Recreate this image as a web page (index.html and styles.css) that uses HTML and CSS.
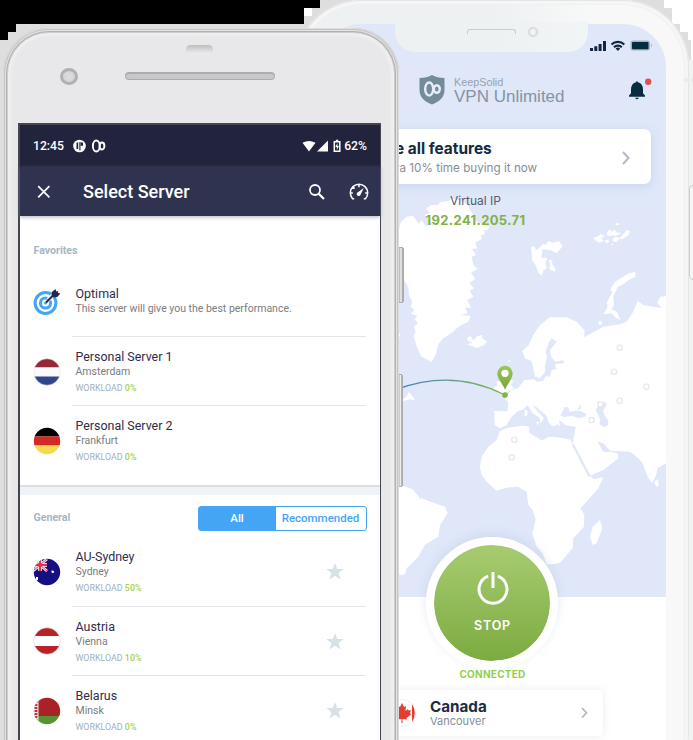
FILE: index.html
```html
<!DOCTYPE html>
<html lang="en">
<head>
<meta charset="utf-8">
<title>VPN Unlimited</title>
<link rel="stylesheet" href="styles.css">
</head>
<body>
<main class="stage">
  <svg class="backdrop" width="693" height="740" viewBox="0 0 693 740" shape-rendering="crispEdges">
    <path fill="#dededf" d="M0 0h693v740H0z"/>
    <path fill="#000" d="M0 0h320v8h-16v16H16v8H8v8H0z"/>
    <path fill="#fff" d="M304 8h8v8h-8zM664 0h29v740h-2V40h-3v-8h-8v-8h-8V8h-8z"/>
    <path fill="#f1f2f2" d="M684 60h9v680h-9z"/>
  </svg>

  <section class="phone-back">
    <div class="speaker-back"></div><div class="camera-back"></div>
    <div class="notch"></div>
    <div class="vpn">
      <svg class="map" width="348" height="573" viewBox="318 24 348 573">
        <defs>
          <linearGradient id="arc" x1="27" x2="345" y1="0" y2="0" gradientUnits="userSpaceOnUse"><stop stop-color="#4779ac"/><stop offset=".35" stop-color="#5d93a0"/><stop offset="1" stop-color="#86b64b"/></linearGradient>
          <linearGradient id="pin" x2="0" y2="1"><stop stop-color="#9cc862"/><stop offset="1" stop-color="#74a634"/></linearGradient>
        </defs>
        <g transform="translate(390 180) scale(.33333)">
          <g fill="#fff">
            <path d="M0 150L27 148 32 126 50 110 68 107 77 118 87 132 95 120 106 137 130 134 103 105 120 99 107 86 125 75 145 74 150 66 175 63 185 55 215 62 235 77 240 90 250 105 248 118 275 130 298 140 291 152 283 148 284 163 272 166 276 176 255 188 262 205 246 207 258 225 245 230 250 255 262 267 243 278 256 296 238 310 252 325 239 332 250 350 232 360 243 385 226 382 233 400 212 405 242 407 235 425 205 440 190 455 160 475 145 492 138 522 125 546 95 530 82 505 70 467 76 455 72 440 84 430 74 418 82 408 63 401 74 390 62 380 67 365 57 345 55 320 42 300 0 260z"/>
            <path d="M231 475l10-8 10 14 10-12 15-4 2 10 13 10-10 11-22 8-15-7-12-3 15-7-13-3z"/>
            <path d="M423 202l9-4 7 13 13-12 6 10-4 24 19 1-7 16 5 13-11 9-6 15-9-9-8-22-10-14zM448 203l12-11 7 3 8-12 12 5 20-4 11 15-18 20-20-9-20-2zM477 239l11 3-2 10 11 14-3 9-16-7 2-12z"/>
            <path d="M610 175l15-7 7-6 11 6-10 8 9 6-14 6-10-6zM650 158l9-10 7 8 8-8 4 9 16 3-16 8-9-2-16 2zM668 176l9-6 12 4 22-24 8 2-2 12-18 13-9-1-12 10-10-3zM678 130h9v5h-9zM645 182l10-4 2 8-8 3zM662 191l10 1-6 4z"/>
            <path d="M735 276l2 14-21 10-20 15-12 5-14 29 2 26-8 13 17 7 10 25-12-6-15-14-23 3 12-24-3-11 7-13 10-20-7-5 15-25 20-12 18-12z"/><circle cx="631" cy="429" r="6"/>
            <path d="M840 348L810 350 802 368 815 385 790 380 760 375 743 362 730 395 710 425 690 433 640 440 583 472 583 450 560 425 530 412 480 412 450 435 430 465 415 497 397 512 405 535 425 543 435 590 450 595 465 575 465 555 471 530 467 517 475 490 485 475 500 485 480 510 484 531 496 545 520 541 522 549 495 553 500 567 485 570 480 590 467 588 460 602 440 605 433 598 403 600 385 623 365 630 345 655 355 668 352 694 312 693 314 735 330 745 350 735 365 710 385 692 398 690 413 675 428 700 449 713 451 731 462 714 444 696 428 675 440 682 470 708 475 726 491 745 502 732 511 740 507 719 526 735 557 741 547 795 568 830 600 887 640 870 685 835 682 820 663 816 640 815 623 785 640 790 660 812 720 815 745 835 758 850 775 895 787 909 798 886 803 865 840 843z"/>
            <path d="M330 753L350 744 400 737 417 740 419 760 460 780 472 772 490 770 542 778 547 795 575 845 600 888 612 897 640 892 625 925 572 985 583 1005 582 1040 550 1075 548 1105 510 1148 490 1152 470 1153 458 1120 440 1100 427 1060 437 1020 428 990 415 975 410 935 391 925 385 920 350 923 320 932 290 905 275 885 270 860 275 830 295 800 320 780z"/>
            <path d="M630 1020l7 25-17 45-12 5-8-25 8-30zM795 903l8-5 4 17-6 7-7-10z"/>
            <path d="M0 913L50 920 70 930 90 955 75 962 95 955 130 968 165 980 173 1000 150 1035 145 1070 105 1094 85 1130 50 1165 46 1182 35 1186 20 1180z"/>
            <path d="M310 625l12-10-4-12 10 2 7-15 22 5 12 8-5 13 7 9-18 10-22 6zM405 690l8 2-2 15-8 1zM436 724l12 3-4 9zM355 540l8 2-6 5zM20 670l30-20 7-15 10 14 9 12-16-3-17 4zM27 460l5 3-5 10z"/>
          </g>
          <g fill="#dfe7f9">
            <path d="M511 707l14-27 9 2 5 14 14-4 20 1 16 10-4 7-18 4-22-6-22 3z"/>
            <path d="M567 681l8-9-4 16-9 3zM617 690l12-19 18-5 3 8-11 18 5 15 12 15-4 16-12 3-12-10 3-12z"/>
            <path d="M505 740l50 0-7 33-8 6-35-10-32 2-20 10-22-15-16-10 18-13 40 10 3-17z"/>
          </g>
          <path fill="none" stroke="#dfe7f9" stroke-width="7" d="M549 794l50 96"/>
          <g fill="#fff" stroke="#e5e6e8" stroke-width="3.5"><circle cx="689" cy="503" r="8"/><circle cx="672" cy="575" r="8"/><circle cx="769" cy="620" r="8"/><circle cx="689" cy="662" r="8"/><circle cx="631" cy="673" r="8"/><circle cx="605" cy="720" r="8"/><circle cx="373" cy="779" r="8"/><circle cx="365" cy="832" r="8"/></g>
          <path fill="none" stroke="url(#arc)" stroke-width="4" d="M20 628Q190 565 345 645"/>
          <circle cx="345" cy="645" r="8.5" fill="#83b444"/>
          <path fill="url(#pin)" d="M345 629C339 612 322 598 322 580a23 23 0 0 1 46 0C368 598 351 612 345 629z"/>
          <circle cx="345" cy="580" r="11" fill="#fff"/>
        </g>
      </svg>

      <div class="ios-status">
        <svg width="64" height="14" viewBox="590 39 64 14">
          <path fill="#13263f" d="M590 48h3v3h-3zM594.300 46.300h3v4.700h-3zM598.600 44h3v7h-3zM603 41h3v10h-3z"/>
          <path fill="none" stroke="#13263f" stroke-width="2.100" d="M611.500 44.500a9 9 0 0 1 12.800 0M614 47.200a5.500 5.500 0 0 1 7.800 0"/><path fill="#13263f" d="M615.600 48.600a3.400 3.400 0 0 1 4.600 0l-2.300 2.500z"/>
          <rect x="630.500" y="40.600" width="19.500" height="10" rx="2.500" fill="#a4b2c5"/><rect x="632" y="42" width="16.500" height="7.300" rx="1" fill="#052b40"/><path fill="#a4b2c5" d="M651 43.500q2 2 0 4z"/>
        </svg>
      </div>
      <header class="brand">
        <svg width="26" height="31" viewBox="0 0 26 31"><path fill="#748b9b" d="M13 0q5 3 12.500 3v12c0 8-6 12-12.500 14.500C6.500 27 .5 23 .5 15V3Q8 3 13 0z"/><g fill="none" stroke="#e5edf9" stroke-width="2.400"><ellipse cx="10.200" cy="14" rx="4" ry="6.500"/><ellipse cx="17.800" cy="14" rx="3" ry="3.800"/></g></svg>
        <div class="brand-name"><span>KeepSolid</span><b>VPN Unlimited</b></div>
        <svg class="bell" width="24" height="24" viewBox="0 0 24 24"><path fill="#082d40" d="M7.500 3.200q1-.2 1.100 1.100 4.800 1 5.100 7v4l2 2.200v1.200H-.3v-1.200l2-2.200v-4q.3-6 5.100-7 0-1 .7-1.100zM5.700 19.700h4q-2 3-4 0z" transform="translate(.3)"/><circle cx="19.200" cy="3.700" r="3.200" fill="#e5504b"/></svg>
      </header>
      <article class="promo">
        <div><h2>e all features</h2><p>ra 10% time buying it now</p></div>
        <svg width="8" height="14" viewBox="0 0 8 14"><path fill="none" stroke="#b3bac4" stroke-width="2" d="M1 1l5.500 6L1 13"/></svg>
      </article>
      <div class="ip"><span>Virtual IP</span><b>192.241.205.71</b></div>
      <div class="panel">
        <button class="stop">
          <svg width="32" height="36" viewBox="0 0 32 36"><path fill="none" stroke="#fff" stroke-width="3" d="M16 1v16M20.900 5.200a14 14 0 1 1-9.800 0"/></svg>
          STOP
        </button>
        <p class="connected">CONNECTED</p>
        <article class="country">
          <svg width="28" height="28" viewBox="0 0 28 28"><circle cx="14" cy="14" r="13.500" fill="#fff" stroke="#eee"/><path fill="#e43c30" d="M24 5q5.500 9 0 18zM4 5q-5.500 9 0 18zM14 4l2 4 2-1-.5 5 2.500-2 .6 1.500 2.400-.2-1 3 1.300 1-4.800 3.700.5 1.500-4.500-.4V24h-1v-3.900l-4.500.4.500-1.500-4.800-3.700 1.300-1-1-3 2.400.2.600-1.500 2.500 2L10 7l2 1z"/></svg>
          <div class="place"><h2>Canada</h2><p>Vancouver</p></div>
          <svg width="7" height="12" viewBox="0 0 7 12"><path fill="none" stroke="#bbb" stroke-width="1.700" d="M1 1l4.500 4.800L1 10.600"/></svg>
        </article>
      </div>
    </div>
  </section>
  <i class="side-button back-key"></i>
  <i class="antenna"></i>
  <i class="side-button key-one"></i>
  <i class="side-button key-two"></i>

  <section class="phone-front">
    <div class="sensor"></div>
    <div class="hardware"><i class="lens"></i><i class="earpiece"></i></div>
    <div class="screen">
      <div class="status">
        <span>12:45</span>
        <svg width="33" height="14" viewBox="0 0 33 14"><circle cx="6.500" cy="7" r="6.300" fill="#fff"/><path fill="#22243d" d="M3.500 3.500h1.700v6.500H3.500zM7.500 3.500H10v3.300H7.500z"/><path fill="none" stroke="#22243d" stroke-width="1.100" d="M6.900 3v8.500"/><g fill="none" stroke="#fff" stroke-width="1.900"><ellipse cx="23.300" cy="7" rx="3.400" ry="5.500"/><ellipse cx="29" cy="7" rx="2.400" ry="3.500"/></g></svg>
        <svg class="signals" width="40" height="14" viewBox="0 0 40 14"><path fill="#fff" d="M.5 3.800Q7 0 13.500 3.800L7 12.500zM26 1.500v11H15z"/><path fill="none" stroke="#fff" stroke-width="1.500" d="M32.300 2.700h5.500v9.500h-5.500zM33.800 1.500h2.500"/><path fill="#fff" d="M35.500 4l-2.200 4h1.500v3l2.200-4h-1.500z"/></svg>
        <span class="charge">62%</span>
      </div>
      <div class="toolbar">
        <svg width="14" height="14" viewBox="0 0 14 14"><path stroke="#fff" stroke-width="1.700" d="M1.200 1.200l11.200 11.200M12.400 1.200L1.200 12.400"/></svg>
        <h1>Select Server</h1>
        <svg class="search" width="18" height="18" viewBox="0 0 18 18"><circle cx="7" cy="7" r="5" fill="none" stroke="#fff" stroke-width="1.800"/><path stroke="#fff" stroke-width="2.200" d="M10.700 10.700l5.300 5.300"/></svg>
        <svg width="20" height="18" viewBox="0 0 20 18"><path fill="none" stroke="#fff" stroke-width="1.500" d="M5.200 15.700H3.500a8.700 8.700 0 1 1 13 0h-1.700M10 1.500v2.800M4 4l1.600 1.600M1.500 10h2.300M18.500 10h-2.300"/><path fill="#fff" d="M14.800 5l-3.200 6.500a2 2 0 1 1-2.700-2.300z"/></svg>
      </div>

      <div class="favorites">
        <h3>Favorites</h3>
        <div class="row optimal">
          <svg class="flag" width="28" height="28" viewBox="0 0 28 28"><g fill="none" stroke="#45a5f5" stroke-width="3"><circle cx="12.500" cy="15" r="10.400"/><circle cx="12.500" cy="15" r="5.100"/></g><circle cx="12.500" cy="15" r="1.500" fill="#45a5f5"/><path stroke="#fff" stroke-width="4" d="M15 12l7-7"/><path stroke="#25264a" stroke-width="2" d="M13 14.500l9.500-9.500"/><path fill="#25264a" d="M18.500 7l.3-3 3.700-3 .7 2.500 2-.5-.3 1.800 2.500.8-3.200 3.500-3.700.4z"/></svg>
          <div class="info"><h4>Optimal</h4><p>This server will give you the best performance.</p></div>
        </div>
        <div class="row fav">
          <svg class="flag" width="28" height="28" viewBox="0 0 28 28"><clipPath id="disc"><circle cx="14" cy="14" r="13.200"/></clipPath><g clip-path="url(#disc)"><path fill="#fafafa" d="M0 0h28v28H0z"/><path fill="#952737" d="M0 0h28v9.200H0z"/><path fill="#30458a" d="M0 18.500h28V28H0z"/></g><circle cx="14" cy="14" r="13.200" fill="none" stroke="#e4e4e6" stroke-width=".5"/></svg>
          <div class="info"><h4>Personal Server 1</h4><p>Amsterdam</p><small>WORKLOAD <b>0%</b></small></div>
        </div>
        <div class="row fav last">
          <svg class="flag" width="28" height="28" viewBox="0 0 28 28"><g clip-path="url(#disc)"><path d="M0 0h28v9.500H0z"/><path fill="#d42925" d="M0 9.500h28v9H0z"/><path fill="#f5d94f" d="M0 18.500h28V28H0z"/></g></svg>
          <div class="info"><h4>Personal Server 2</h4><p>Frankfurt</p><small>WORKLOAD <b>0%</b></small></div>
        </div>
      </div>

      <div class="general">
        <div class="general-head"><h3>General</h3><div class="tabs"><b class="active">All</b><b>Recommended</b></div></div>
        <div class="row gen">
          <svg class="flag" width="28" height="28" viewBox="0 0 28 28"><g clip-path="url(#disc)"><path fill="#160e83" d="M0 0h28v28H0z"/><path stroke="#fff" stroke-width="2.600" d="M0 1l14 12M0 13L14 1"/><path stroke="#fff" stroke-width="3.600" d="M0 7h14M7 0v13"/><path stroke="#dc3545" stroke-width="1" d="M0 1l14 12M0 13L14 1"/><path stroke="#dc3545" stroke-width="2" d="M0 7h14M7 0v13"/><path fill="#fff" d="M18.500 12.500l2 .2.800 1.300-1.300 1.300-1.500-.8zM3 19h2v3H3z"/></g></svg>
          <div class="info"><h4>AU-Sydney</h4><p>Sydney</p><small>WORKLOAD <b>50%</b></small></div>
          <svg class="star" width="18" height="17" viewBox="0 0 18 17"><path fill="#d8e1e5" d="M9 0l2.300 6H17.700l-5.100 4 1.900 6.500L9 12.700l-5.500 3.800L5.400 10 .3 6h6.400z"/></svg>
        </div>
        <div class="row gen">
          <svg class="flag" width="28" height="28" viewBox="0 0 28 28"><g clip-path="url(#disc)"><path fill="#b92328" d="M0 0h28v28H0z"/><path fill="#fff" d="M0 9h28v10H0z"/></g><circle cx="14" cy="14" r="13.200" fill="none" stroke="#e4e4e6" stroke-width=".5"/></svg>
          <div class="info"><h4>Austria</h4><p>Vienna</p><small>WORKLOAD <b>10%</b></small></div>
          <svg class="star" width="18" height="17" viewBox="0 0 18 17"><path fill="#d8e1e5" d="M9 0l2.300 6H17.700l-5.100 4 1.900 6.500L9 12.700l-5.500 3.800L5.400 10 .3 6h6.400z"/></svg>
        </div>
        <div class="row gen last">
          <svg class="flag" width="28" height="28" viewBox="0 0 28 28"><g clip-path="url(#disc)"><path fill="#aa2228" d="M0 0h28v19H0z"/><path fill="#549433" d="M0 19h28v9H0z"/><path fill="#f3e8e8" d="M0 0h5.500v28H0z"/><path fill="none" stroke="#b3383d" stroke-width="2.800" stroke-dasharray="2 1" d="M3 4v21"/></g></svg>
          <div class="info"><h4>Belarus</h4><p>Minsk</p><small>WORKLOAD <b>0%</b></small></div>
          <svg class="star" width="18" height="17" viewBox="0 0 18 17"><path fill="#d8e1e5" d="M9 0l2.300 6H17.700l-5.100 4 1.900 6.500L9 12.700l-5.500 3.800L5.400 10 .3 6h6.400z"/></svg>
        </div>
      </div>
    </div>
  </section>
</main>
</body>
</html>
```
FILE: styles.css
```css
* { box-sizing: border-box; }
body { margin: 0; }
h1, h2, h3, h4, p { margin: 0; }
svg { display: block; flex: none; }
.stage { position: relative; width: 693px; height: 740px; overflow: hidden; font-family: Roboto, sans-serif; }
.backdrop { position: absolute; inset: 0; }

/* rear handset */
.phone-back { position: absolute; left: 295px; top: 0; width: 394px; height: 800px; padding: 24px 23px 0; border-radius: 67px; background: linear-gradient(90deg, #edf1f2 50%, #f8f8f8 75%); box-shadow: inset 0 0 0 1px #e3e5e6, inset 0 0 0 4px #f5f7f7, inset 0 0 0 5px #eff1f1; }
.speaker-back { position: absolute; z-index: 2; left: 172px; top: 29px; width: 49px; height: 5px; border: 1px solid #c9cdcf; border-bottom: 0; border-radius: 3px 3px 0 0; }
.camera-back { position: absolute; z-index: 2; left: 233px; top: 27px; width: 10px; height: 10px; border-radius: 50%; background: radial-gradient(#f5f5f5 25%, #b9bdbe); }
.notch { position: absolute; z-index: 1; left: 100px; top: 22px; width: 193px; height: 30px; border-radius: 0 0 20px 20px; background: linear-gradient(90deg, #edf1f2 50%, #f2f5f6); }
.vpn { position: relative; width: 348px; height: 776px; border-radius: 43px 43px 0 0; overflow: hidden; background: #dfe7f9; display: flow-root; }
.map { position: absolute; left: 0; top: 0; }
.ios-status, .brand, .promo, .ip, .panel { position: relative; }
.ios-status { display: flex; justify-content: flex-end; padding: 15px 12px 0 0; height: 51px; }
.brand { display: flex; height: 54px; padding-left: 101px; }
.brand-name { display: flex; flex-direction: column; margin-left: 9px; width: 175px; font-family: "Liberation Sans", sans-serif; color: #8494a3; }
.brand-name span { font-size: 10.800px; line-height: 12px; margin-top: 1px; color: #94a2b0; }
.brand-name b { font-weight: 400; font-size: 17px; line-height: 17px; white-space: nowrap; }
.bell { margin-top: 3px; }
.promo { display: flex; align-items: center; justify-content: space-between; width: 333px; height: 55px; padding: 2px 21px 0 77px; border-radius: 7px; background: #fff; box-shadow: 0 2px 8px #b8c4de88; font-family: Inter, sans-serif; }
.promo h2 { font-size: 15.400px; line-height: 21px; color: #102c42; white-space: nowrap; }
.promo p { font-size: 11.700px; line-height: 18px; color: #858e99; white-space: nowrap; }
.ip { display: flex; flex-direction: column; align-items: center; width: 315px; height: 413px; padding-top: 8px; font-family: Inter, sans-serif; }
.ip span { font-size: 12px; line-height: 18px; color: #555c6c; }
.ip b { font-size: 13px; line-height: 20px; letter-spacing: .35px; color: #82b145; }
.panel { height: 203px; background: #fff; font-family: Inter, sans-serif; display: flow-root; }
.stop { display: flex; flex-direction: column; align-items: center; width: 132px; height: 132px; margin: -60px 0 0 108px; padding: 26px 0 0 1px; border: 8px solid #fff; border-radius: 50%; background: linear-gradient(#a7cc70, #7cab41) padding-box; color: #fff; font: 600 12.500px/20px Inter, sans-serif; letter-spacing: .8px; box-shadow: 0 -3px 10px #b8c4de66; gap: 9px; }
.connected { width: 349px; margin-top: -3px; text-align: center; color: #91d04e; font-size: 10px; font-weight: 700; line-height: 16px; letter-spacing: .25px; }
.country { display: flex; align-items: center; width: 285px; height: 46px; margin-top: 8px; padding: 0 15px 0 72px; border-radius: 4px; background: #fff; box-shadow: 0 0 8px #ccd0d866; }
.place { margin-left: 12px; flex: 1; }
.country > svg:first-child { margin: 0 2px 0 -2px; }
.place h2 { color: #182d47; font-size: 15.200px; line-height: 16px; padding-top: 1px; }
.place p { color: #858d99; font-size: 11px; line-height: 13px; }

/* physical keys */
.side-button { position: absolute; border: 1px solid #a9abad; border-radius: 2px; background: linear-gradient(90deg, #888a8c, #f2f2f2 60%, #999); }
.back-key { left: 689px; top: 185px; width: 8px; height: 95px; background: #f6f6f6; border-color: #ccc; border-radius: 4px; }
.key-one { left: 397px; top: 247px; width: 7px; height: 56px; }
.key-two { left: 397px; top: 374px; width: 6px; height: 113px; }
.antenna { position: absolute; left: 684px; top: 78px; width: 9px; height: 4px; background: #eaebeb; }

/* front handset */
.phone-front { position: absolute; left: 3px; top: 28px; width: 396px; height: 800px; border-radius: 46px; padding: 17px 15px 0; background: #e8e8ea; box-shadow: inset 0 0 0 1px #dcdcdd, inset 0 0 0 2px #c4c4c5, inset 0 0 0 3px #e4e4e5, inset 0 0 0 4px #b1b1b3, inset 0 0 0 5px #cecece, inset 0 0 2px 8px #efeff0; }
.sensor { width: 27px; height: 9px; margin-left: 168px; border-radius: 5px; background: linear-gradient(#bebec0, #eee); }
.hardware { display: flex; align-items: center; height: 69px; padding: 0 0 25px 42px; }
.lens { width: 18px; height: 17px; border: 3px solid #b0b0b2; border-radius: 50%; background: radial-gradient(#dedee0, #cecfd0); }
.earpiece { width: 150px; height: 8px; margin-left: 47px; border: 1px solid #acacae; border-top-width: 2px; border-radius: 4px; background: #c8c8ca; }
.screen { width: 363px; height: 640px; border: solid #44454d; border-width: 2px 1px 0 2px; background: #fff; }
.status { display: flex; align-items: center; height: 42px; padding: 0 13px; background: #22243d; color: #fff; font-size: 12.200px; font-weight: 500; }
.status span + svg { margin-left: 9px; }
.status .signals { margin-left: auto; }
.charge { margin-left: 2px; }
.toolbar { position: relative; display: flex; align-items: center; height: 49px; padding: 0 11px 0 17px; background: #2f3350; color: #fff; box-shadow: 0 1px 4px #77799599; }
.toolbar h1 { margin-left: 32px; font-size: 18px; font-weight: 500; line-height: 24px; }
.search { margin: 0 23px 0 auto; }
.favorites { height: 271px; border-bottom: 2px solid #dddfdf; }
h3 { color: #a5b6c4; font-size: 10.600px; font-weight: 700; line-height: 14px; }
.favorites h3 { margin-left: 13.500px; padding: 28px 0 0; height: 53px; }
.row { display: flex; align-items: center; margin-right: 14px; padding-left: 13.500px; position: relative; }
.row:not(.last) { background: linear-gradient(#e4e5e7, #e4e5e7) 52px 100% / 294px 1px no-repeat; }
.optimal { height: 68px; }
.optimal .info { margin-bottom: 5px; }
.optimal .flag { margin-bottom: 2px; }
.fav { height: 69px; }
.flag { margin-left: -.5px; }
.info { margin-left: 14.500px; flex: 1; }
.info h4 { font-size: 12.450px; font-weight: 400; line-height: 17px; color: #302c4d; }
.info p { font-size: 10.500px; line-height: 14px; color: #7b7b80; }
.info small { display: block; margin-top: 3px; font-size: 8.900px; line-height: 13px; color: #9cb0bf; }
.info small b { font-weight: 500; color: #9ed34f; }
.general { border-top: 8px solid #eff2f7; }
.general-head { display: flex; justify-content: space-between; padding: 11px 13.500px 0 13.500px; height: 42px; }
.general-head h3 { padding-top: 5px; }
.tabs { display: flex; width: 169px; height: 25px; border: 1px solid #45a5f5; border-radius: 3px; color: #45a5f5; font-size: 11.500px; line-height: 23px; text-align: center; }
.tabs b { flex: 1; font-weight: 500; }
.tabs .active { flex: 0 0 77px; background: #45a5f5; color: #fff; }
.gen { height: 69.500px; }
.star { margin-right: 22px; }
```
